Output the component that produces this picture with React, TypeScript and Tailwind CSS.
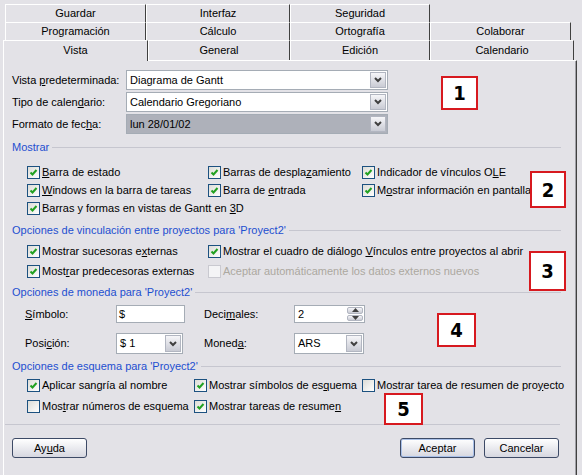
import type { ReactNode } from "react";

const FONT = "font-['Liberation_Sans',Arial,sans-serif]";

interface TabDef {
  label: string;
  w: number;
}

const row1: TabDef[] = [
  { label: "Guardar", w: 141 },
  { label: "Interfaz", w: 144 },
  { label: "Seguridad", w: 140 },
];
const row2: TabDef[] = [
  { label: "Programación", w: 141 },
  { label: "Cálculo", w: 144 },
  { label: "Ortografía", w: 140 },
  { label: "Colaborar", w: 141 },
];

const Tab = ({ label, w, h = 18 }: { label: string; w: number; h?: number }) => (
  <div
    className="flex shrink-0 items-center justify-center border-t border-l border-r border-t-white border-l-white border-r-[#404040] bg-[#e3e2e7] text-[11px] text-black"
    style={{ width: w, height: h }}
  >
    {label}
  </div>
);

const Chevron = () => (
  <svg width="8" height="6" viewBox="0 0 8 6">
    <polyline points="1,1 4,4 7,1" fill="none" stroke="#404040" strokeWidth="2" />
  </svg>
);

const DropBtn = () => (
  <span className="flex h-full w-[16px] shrink-0 items-center justify-center border border-[#b2b6c1] bg-gradient-to-b from-[#f6f6f9] to-[#c9cbd4]">
    <Chevron />
  </span>
);

const Combo = ({ value, w, h = 20, grey = false }: { value: string; w: number; h?: number; grey?: boolean }) => (
  <div
    className={`flex items-stretch border border-[#a5acb5] p-px ${grey ? "bg-[#aeb1ba]" : "bg-white"}`}
    style={{ width: w, height: h }}
  >
    <span className="flex flex-1 items-center pl-[2px] text-[11px] text-black">{value}</span>
    <DropBtn />
  </div>
);

const Check = ({ checked = true, disabled = false }: { checked?: boolean; disabled?: boolean }) => (
  <span
    className={`flex h-[13px] w-[13px] shrink-0 items-center justify-center border ${
      disabled ? "border-[#c9c9d0] bg-[#f4f4f6]" : "border-[#1c5180] bg-gradient-to-br from-[#dcdcd7] to-white"
    }`}
  >
    {checked && (
      <svg width="9" height="9" viewBox="0 0 9 9">
        <polyline points="1.5,4.5 3.5,6.5 7.5,2" fill="none" stroke="#21a121" strokeWidth="2" />
      </svg>
    )}
  </span>
);

const CheckItem = ({
  children,
  w,
  checked = true,
  disabled = false,
}: {
  children: ReactNode;
  w?: number;
  checked?: boolean;
  disabled?: boolean;
}) => (
  <div className="flex shrink-0 items-center gap-[2px]" style={w ? { width: w } : undefined}>
    <Check checked={checked} disabled={disabled} />
    <span className={`whitespace-nowrap text-[11px] ${disabled ? "text-[#aca8a0]" : "text-black"}`}>{children}</span>
  </div>
);

const GroupTitle = ({ children }: { children: ReactNode }) => (
  <div className="flex h-[13px] items-center gap-[3px]">
    <span className="whitespace-nowrap text-[11px] text-[#1e4fd0]">{children}</span>
    <span className="h-0 flex-1 border-t border-[#c6c6cf]"></span>
  </div>
);

const Marker = ({ n, className }: { n: number; className: string }) => (
  <div
    className={`absolute flex items-center justify-center border-2 border-[#d7191f] bg-white font-['DejaVu_Sans_Condensed',sans-serif] text-[20px] font-bold text-black ${className}`}
  >
    {n}
  </div>
);

const XpButton = ({ children, primary = false }: { children: ReactNode; primary?: boolean }) => (
  <button
    className={`flex h-[20px] w-[75px] items-center justify-center rounded-[3px] border border-[#3d4a66] bg-gradient-to-b from-white to-[#d6d7e0] text-[11px] text-black ${
      primary ? "shadow-[inset_0_0_0_1px_#a9c0e8]" : ""
    }`}
  >
    {children}
  </button>
);

const App = () => {
  return (
    <div className={`relative h-[475px] w-[582px] overflow-hidden bg-[#e3e2e7] pt-[4px] ${FONT}`}>
      <div className="flex pl-[5px]">
        {row1.map((t) => (
          <Tab key={t.label} {...t} />
        ))}
      </div>
      <div className="flex pl-[5px]">
        {row2.map((t) => (
          <Tab key={t.label} {...t} />
        ))}
      </div>
      <div className="flex pl-[3px]">
        <div className="relative z-10 -mb-px flex h-[21px] w-[145px] items-center justify-center border-t border-l border-r border-t-white border-l-white border-r-[#404040] bg-[#e3e2e7] pb-px text-[11px]">
          Vista
        </div>
        <Tab label="General" w={142} h={20} />
        <Tab label="Edición" w={140} h={20} />
        <Tab label="Calendario" w={144} h={20} />
      </div>

      <div className="ml-[3px] h-[415px] w-[574px] border-t border-l border-r border-t-white border-l-white border-r-[#404040] pl-[8px] pt-[9px] shadow-[inset_-1px_0_0_#a0a0a6]">
        <div className="flex w-[549px] flex-col">
          <div className="flex flex-col gap-[2px]">
            <div className="flex items-center">
              <span className="w-[114px] text-[11px]">
                Vista <u>p</u>redeterminada:
              </span>
              <Combo value="Diagrama de Gantt" w={262} />
            </div>
            <div className="flex items-center">
              <span className="w-[114px] text-[11px]">
                Tipo de calen<u>d</u>ario:
              </span>
              <Combo value="Calendario Gregoriano" w={262} />
            </div>
            <div className="flex items-center">
              <span className="w-[114px] text-[11px]">
                Formato de fec<u>h</u>a:
              </span>
              <Combo value="lun 28/01/02" w={262} grey />
            </div>
          </div>

          <div className="mt-[7px]">
            <GroupTitle>Mostrar</GroupTitle>
          </div>
          <div className="mt-[9px] flex flex-col pl-[15px]">
            <div className="flex h-[18px] items-center">
              <CheckItem w={181}>
                <u>B</u>arra de estado
              </CheckItem>
              <CheckItem w={154}>
                Barras de despla<u>z</u>amiento
              </CheckItem>
              <CheckItem>
                Indicador de vínculos O<u>L</u>E
              </CheckItem>
            </div>
            <div className="flex h-[18px] items-center">
              <CheckItem w={181}>
                <u>W</u>indows en la barra de tareas
              </CheckItem>
              <CheckItem w={154}>
                Barra de <u>e</u>ntrada
              </CheckItem>
              <CheckItem>
                M<u>o</u>strar información en pantalla
              </CheckItem>
            </div>
            <div className="flex h-[18px] items-center">
              <CheckItem>
                Barras y formas en vistas de Gantt en <u>3</u>D
              </CheckItem>
            </div>
          </div>

          <div className="mt-[7px]">
            <GroupTitle>Opciones de vinculación entre proyectos para 'Proyect2'</GroupTitle>
          </div>
          <div className="mt-[5px] flex flex-col gap-[2px] pl-[15px]">
            <div className="flex h-[18px] items-center">
              <CheckItem w={181}>
                Mostrar sucesoras e<u>x</u>ternas
              </CheckItem>
              <CheckItem>
                Mostrar el cuadro de diálogo <u>V</u>ínculos entre proyectos al abrir
              </CheckItem>
            </div>
            <div className="flex h-[18px] items-center">
              <CheckItem w={181}>
                Most<u>r</u>ar predecesoras externas
              </CheckItem>
              <CheckItem checked={false} disabled>
                Aceptar automáticamente los datos externos nuevos
              </CheckItem>
            </div>
          </div>

          <div className="mt-[6px]">
            <GroupTitle>Opciones de moneda para 'Proyect2'</GroupTitle>
          </div>
          <div className="mt-[6px] flex h-[18px] items-center pl-[13px]">
            <span className="w-[91px] text-[11px]">
              <u>S</u>ímbolo:
            </span>
            <div className="flex h-[18px] w-[69px] items-center border border-[#a5acb5] bg-white pl-[2px] text-[11px]">
              $
            </div>
            <span className="ml-[19px] w-[90px] text-[11px]">
              Deci<u>m</u>ales:
            </span>
            <div className="flex h-[18px] w-[71px] items-stretch border border-[#a5acb5] bg-white p-px">
              <span className="flex flex-1 items-center pl-[2px] text-[11px]">2</span>
              <span className="flex w-[16px] flex-col gap-px">
                <span className="flex flex-1 items-center justify-center rounded-[2px] border border-[#b2b6c1] bg-gradient-to-b from-[#f6f6f9] to-[#c9cbd4]">
                  <svg width="7" height="4" viewBox="0 0 7 4">
                    <polygon points="0,4 3.5,0 7,4" fill="#404040" />
                  </svg>
                </span>
                <span className="flex flex-1 items-center justify-center rounded-[2px] border border-[#b2b6c1] bg-gradient-to-b from-[#f6f6f9] to-[#c9cbd4]">
                  <svg width="7" height="4" viewBox="0 0 7 4">
                    <polygon points="0,0 3.5,4 7,0" fill="#404040" />
                  </svg>
                </span>
              </span>
            </div>
          </div>
          <div className="mt-[10px] flex h-[21px] items-center pl-[13px]">
            <span className="w-[91px] text-[11px]">
              Posi<u>c</u>ión:
            </span>
            <Combo value="$ 1" w={67} h={21} />
            <span className="ml-[21px] w-[90px] text-[11px]">
              Moned<u>a</u>:
            </span>
            <Combo value="ARS" w={70} h={21} />
          </div>

          <div className="mt-[6px]">
            <GroupTitle>Opciones de esquema para 'Proyect2'</GroupTitle>
          </div>
          <div className="mt-[3px] flex flex-col gap-[3px] pl-[15px]">
            <div className="flex h-[18px] items-center">
              <CheckItem w={167}>
                Aplicar san<u>g</u>ría al nombre
              </CheckItem>
              <CheckItem w={168}>
                Mostrar símbolos de es<u>q</u>uema
              </CheckItem>
              <CheckItem checked={false}>
                Mostrar tarea de resumen de pro<u>y</u>ecto
              </CheckItem>
            </div>
            <div className="flex h-[18px] items-center">
              <CheckItem w={167} checked={false}>
                Mos<u>t</u>rar números de esquema
              </CheckItem>
              <CheckItem>
                Mostrar tareas de resume<u>n</u>
              </CheckItem>
            </div>
          </div>

          <div className="-ml-[7px] mt-[9px] w-[555px] border-t border-[#c6c6cf]"></div>

          <div className="mt-[13px] flex items-center pr-[2px]">
            <XpButton>
              Ay<u>u</u>da
            </XpButton>
            <div className="ml-auto flex gap-[9px]">
              <XpButton primary>Aceptar</XpButton>
              <XpButton>Cancelar</XpButton>
            </div>
          </div>
        </div>
      </div>

      <Marker n={1} className="left-[441px] top-[76px] h-[34px] w-[37px]" />
      <Marker n={2} className="left-[530px] top-[171px] h-[37px] w-[36px]" />
      <Marker n={3} className="left-[529px] top-[251px] h-[40px] w-[37px]" />
      <Marker n={4} className="left-[437px] top-[313px] h-[34px] w-[39px]" />
      <Marker n={5} className="left-[384px] top-[393px] h-[32px] w-[39px]" />
    </div>
  );
};

export default App;
